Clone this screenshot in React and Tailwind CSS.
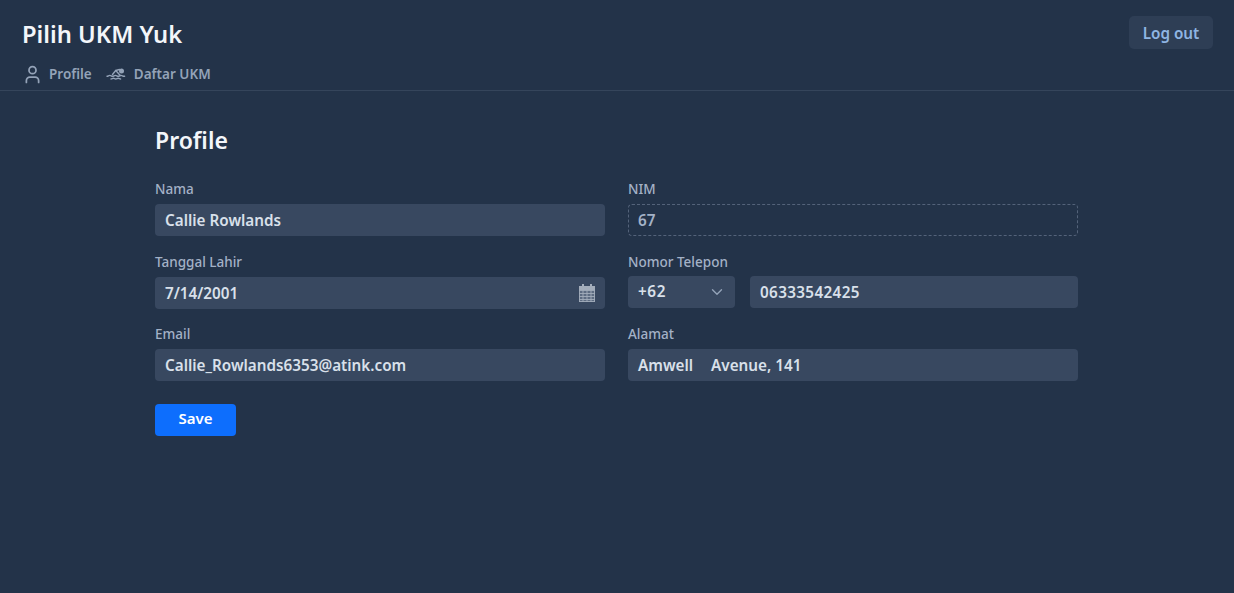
import { User, ChevronDown } from 'lucide-react';

const inputClass = 'h-8 w-full rounded-[4px] bg-[#384860] px-[10px] text-[15.25px] font-semibold leading-8 text-[#d9e0ea]';

const Field = ({ label, children }) => (
  <div className="flex flex-col">
    <label className="mb-[5px] h-[20px] text-[13.5px] font-medium leading-[20px] text-[#a3b1c6]">{label}</label>
    {children}
  </div>
);

const SwimIcon = () => (
  <svg width="21" height="12" viewBox="0 0 21 12" fill="none" stroke="#94a3b8" strokeWidth="1.4" strokeLinecap="round" strokeLinejoin="round">
    <circle cx="15.5" cy="3" r="1.8" fill="#94a3b8" />
    <path d="M6.5 6.5l3.2-4 3.8-1" />
    <path d="M9.7 2.5l4.6 5" />
    <path d="M1 8.3c1.2 0 1.6-.9 2.8-.9s1.6.9 2.8.9 1.6-.9 2.8-.9 1.6.9 2.8.9 1.6-.9 2.8-.9 1.6.9 3.6.9" />
    <path d="M5 11c1 0 1.4-.7 2.4-.7s1.4.7 2.4.7 1.4-.7 2.4-.7 1.4.7 2.4.7" />
  </svg>
);

const CalendarIcon = () => (
  <svg width="16" height="18" viewBox="0 0 16 18">
    <rect x="3" y="0" width="2" height="3" fill="#a3adbb" />
    <rect x="11" y="0" width="2" height="3" fill="#a3adbb" />
    <rect x="0" y="2" width="16" height="4" fill="#a3adbb" />
    <rect x="0" y="6" width="16" height="12" fill="#5d6c82" />
    <path d="M0 6.5h16M0 9.5h16M0 12.5h16M0 15.5h16M0 17.5h16M.5 6v12M4 6v12M8 6v12M12 6v12M15.5 6v12" stroke="#a3adbb" strokeWidth="0.9" fill="none" />
  </svg>
);

export default function App() {
  return (
    <div className="min-h-[593px] bg-[#233349] font-['Noto_Sans',sans-serif]">
      <header className="flex h-[91px] items-start justify-between border-b border-[#35455b] pl-[22px] pr-[21px]">
        <div>
          <h1 className="mt-[17px] text-[23.75px] font-semibold leading-[34px] text-[#f3f6fa]">Pilih UKM Yuk</h1>
          <nav className="mt-[12px] flex items-center text-[13.5px] font-semibold leading-[22px] text-[#94a3b8]">
            <User size={21} strokeWidth={2} />
            <span className="ml-[6px]">Profile</span>
            <span className="ml-[14px]"><SwimIcon /></span>
            <span className="ml-[7px]">Daftar UKM</span>
          </nav>
        </div>
        <button className="mt-[16px] h-[33px] w-[84px] rounded-[5px] bg-[#2e3e55] pt-[1px] text-[15.25px] font-semibold text-[#8fb5e3]">
          Log out
        </button>
      </header>

      <main className="ml-[155px] w-[923px] pt-[31px]">
        <h2 className="text-[23px] font-semibold leading-[36px] text-[#f3f6fa]">Profile</h2>
        <div className="mt-[21px] grid grid-cols-2 gap-x-[23px] gap-y-[15.5px]">
          <Field label="Nama">
            <div className={inputClass}>Callie Rowlands</div>
          </Field>
          <Field label="NIM">
            <div className="h-8 w-full rounded-[4px] border border-dashed border-[#54637a] px-[9px] text-[15.25px] font-semibold leading-[30px] text-[#a3b1c6]">67</div>
          </Field>
          <Field label="Tanggal Lahir">
            <div className={`${inputClass} flex items-center justify-between pr-[2px]`}>
              <span>7/14/2001</span>
              <span className="mr-[8px]"><CalendarIcon /></span>
            </div>
          </Field>
          <Field label="Nomor Telepon">
            <div className="-mt-[1px] flex gap-[15px]">
              <div className="flex h-8 w-[107px] shrink-0 items-center justify-between rounded-[4px] bg-[#384860] pl-[10px] pr-[9px] text-[15.25px] font-semibold text-[#d9e0ea]">
                <span className="tracking-[0.6px]">+62</span>
                <ChevronDown size={18} strokeWidth={1.8} className="text-[#94a3b8]" />
              </div>
              <div className={`${inputClass} tracking-[0.35px]`}>06333542425</div>
            </div>
          </Field>
          <Field label="Email">
            <div className={inputClass}>Callie_Rowlands6353@atink.com</div>
          </Field>
          <Field label="Alamat">
            <div className={inputClass}>
              Amwell<span className="ml-[18px]">Avenue, 141</span>
            </div>
          </Field>
        </div>
        <button className="mt-[22.5px] h-[32px] w-[81px] rounded-[4px] bg-[#0d6efd] pb-[3px] text-[15px] font-semibold text-white">
          Save
        </button>
      </main>
    </div>
  );
}
